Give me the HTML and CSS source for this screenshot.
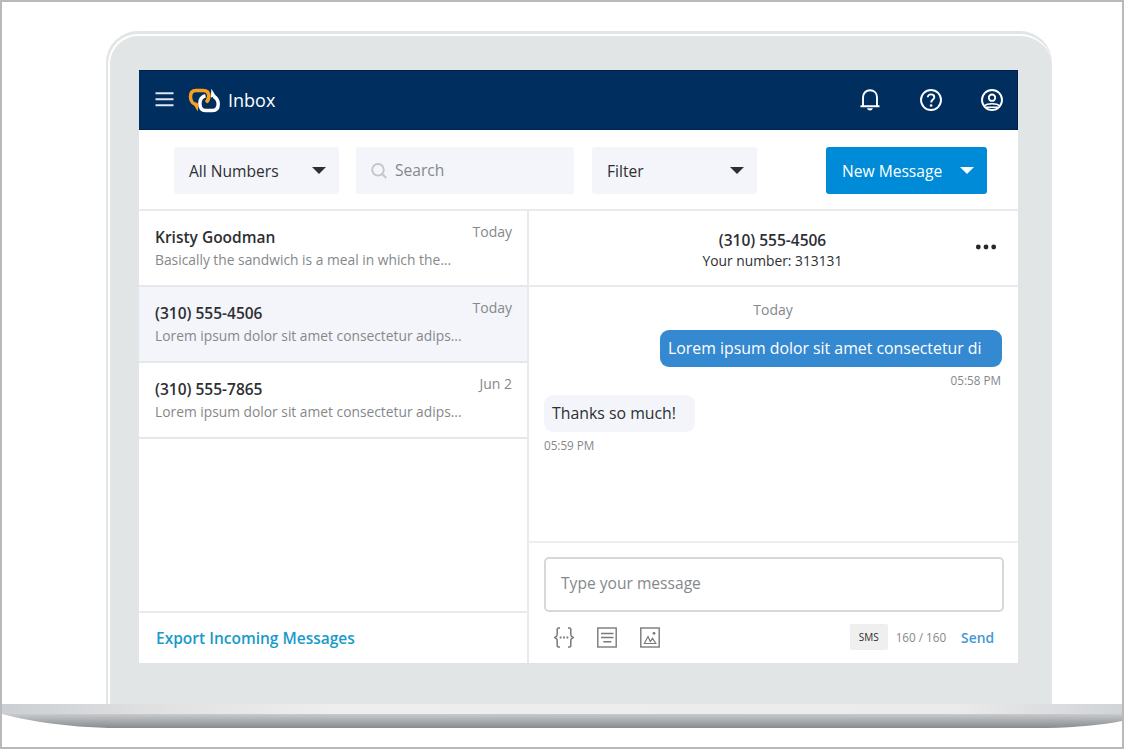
FILE: index.html
```html
<!DOCTYPE html>
<html lang="en">
<head>
  <meta charset="UTF-8">
  <meta name="viewport" content="width=device-width, initial-scale=1.0">
  <title>Inbox</title>
  <link rel="stylesheet" href="styles.css">
</head>
<body>
  <div class="laptop">
    <div class="lid">
      <div class="bezel">
        <div class="screen">

          <header class="topbar">
            <svg class="menu-icon" width="19" height="15" viewBox="0 0 19 15"><path d="M.5 1.300h18M.5 7.300h18M.5 13.300h18" stroke="#dfe6f2" stroke-width="1.900"/></svg>
            <svg class="logo" width="33" height="27" viewBox="0 0 33 27" fill="none">
              <path d="M9 17.500C5 17.500 2.500 14 2.500 9.500Q2.500 3.400 8 3.400H15Q20.800 3.400 20.800 9Q20.800 13 18.500 15" stroke="#f9a01f" stroke-width="3.500"/>
              <path d="M5.500 17.500L9.800 24.500L10.500 16Z" fill="#f9a01f"/>
              <path d="M17.500 8.800C13.500 9.800 11.900 12.500 11.900 16.500Q11.900 23.500 17.500 23.500H24.500Q30.200 23.500 30.200 17Q30.200 11.500 25.500 9.300" stroke="#fff" stroke-width="3.500"/>
              <path d="M23 10.500L23.300 1.800L27.800 9Z" fill="#fff"/>
              <path d="M20.700 7Q21.200 12.500 18 15.200" stroke="#f9a01f" stroke-width="3.300"/>
            </svg>
            <h1>Inbox</h1>
            <nav class="top-icons">
              <svg width="22" height="24" viewBox="0 0 22 24" fill="none" stroke="#fff" stroke-width="1.900"><path d="M1.500 18.300H20.500M4 18V9.500C4 5 7 2.300 11 2.300S18 5 18 9.500V18"/><path d="M8 20.300h6q-.7 2.300-3 2.300t-3-2.300z" fill="#fff" stroke="none"/></svg>
              <svg width="24" height="24" viewBox="0 0 24 24" fill="none" stroke="#fff" stroke-width="1.900"><circle cx="12" cy="12" r="10"/><path d="M8.800 9.300C8.800 7.400 10.200 6.400 12 6.400S15.300 7.600 15.300 9.200C15.300 11.500 12.200 11.600 12.200 14.600"/><circle cx="12.100" cy="17.500" r="1.300" fill="#fff" stroke="none"/></svg>
              <svg width="24" height="24" viewBox="0 0 24 24" fill="none" stroke="#fff" stroke-width="1.900"><circle cx="12" cy="12" r="10"/><circle cx="12" cy="9.700" r="3.200"/><path d="M4.500 18C6.500 16 9 15.800 12 15.800S17.500 16 19.500 18M6 19.300H18" stroke-width="1.500"/></svg>
            </nav>
          </header>

          <div class="toolbar">
            <div class="select numbers"><span>All Numbers</span><i class="caret"></i></div>
            <div class="search">
              <svg width="16" height="16" viewBox="0 0 16 16" fill="none" stroke="#c3c6c9" stroke-width="1.900"><circle cx="7" cy="6.800" r="5.800"/><path d="M11.200 11L15.200 15"/></svg>
              <span>Search</span>
            </div>
            <div class="select filter"><span>Filter</span><i class="caret"></i></div>
            <div class="new-message"><span>New Message</span><i class="caret"></i></div>
          </div>

          <main class="panes">
            <section class="conversations">
              <div class="conversation">
                <div class="name">Kristy Goodman</div>
                <div class="date">Today</div>
                <div class="preview">Basically the sandwich is a meal in which the...</div>
              </div>
              <div class="conversation active">
                <div class="name">(310) 555-4506</div>
                <div class="date">Today</div>
                <div class="preview">Lorem ipsum dolor sit amet consectetur adips...</div>
              </div>
              <div class="conversation">
                <div class="name">(310) 555-7865</div>
                <div class="date">Jun 2</div>
                <div class="preview">Lorem ipsum dolor sit amet consectetur adips...</div>
              </div>
              <a class="export">Export Incoming Messages</a>
            </section>

            <section class="thread">
              <div class="thread-header">
                <div class="contact">
                  <div class="phone">(310) 555-4506</div>
                  <div class="own-number">Your number: 313131</div>
                </div>
                <svg class="more" width="22" height="6" viewBox="0 0 22 6" fill="#26282b"><circle cx="3.300" cy="3" r="2.400"/><circle cx="11" cy="3" r="2.400"/><circle cx="18.700" cy="3" r="2.400"/></svg>
              </div>
              <div class="messages">
                <div class="day">Today</div>
                <div class="bubble sent">Lorem ipsum dolor sit amet consectetur di</div>
                <div class="time sent-time">05:58 PM</div>
                <div class="bubble received">Thanks so much!</div>
                <div class="time">05:59 PM</div>
              </div>
              <div class="compose">
                <div class="input">Type your message</div>
                <div class="actions">
                  <svg width="20" height="21" viewBox="0 0 20 21" fill="none" stroke="#77797b" stroke-width="1.500"><path d="M6 .9H4.500Q3.200 .9 3.200 2.300V7.500Q3.200 9.300 .8 10.500Q3.200 11.700 3.200 13.500V18.700Q3.200 20.100 4.500 20.100H6M14 .9h1.500Q16.800 .9 16.800 2.300V7.500Q16.800 9.300 19.200 10.500Q16.800 11.700 16.800 13.500V18.700Q16.800 20.100 15.500 20.100H14"/><path d="M5.700 10.500h1.800M9.100 10.500h1.800M12.500 10.500h1.800" stroke-width="1.800"/></svg>
                  <svg width="20" height="21" viewBox="0 0 20 21" fill="none" stroke="#77797b" stroke-width="1.400"><rect x=".8" y="1" width="18.400" height="19"/><path d="M4 6.500h12.500M4 10.500h12.500M6.300 14.700h8"/></svg>
                  <svg width="20" height="21" viewBox="0 0 20 21" fill="none" stroke="#77797b" stroke-width="1.400"><rect x=".8" y="1" width="18.400" height="19"/><path d="M4.300 16.500L8 9.500L10.300 14.500L12.500 11.300L15.800 16.500Z" stroke-width="1.200"/><circle cx="14" cy="6.300" r="1.400" fill="#77797b" stroke="none"/></svg>
                  <span class="sms">SMS</span>
                  <span class="count">160 / 160</span>
                  <span class="send">Send</span>
                </div>
              </div>
            </section>
          </main>

        </div>
      </div>
    </div>

    <svg class="base" width="1120" height="26" viewBox="0 0 1120 26">
      <defs>
        <linearGradient id="deck">
          <stop offset="0" stop-color="#cbcfd3"/>
          <stop offset=".15" stop-color="#e2e2e3"/>
          <stop offset=".3" stop-color="#eeeeee"/>
          <stop offset=".85" stop-color="#ebebeb"/>
          <stop offset="1" stop-color="#d0d3d7"/>
        </linearGradient>
        <linearGradient id="edge" x2="0" y2="1">
          <stop offset="0" stop-color="#c8cbcd"/>
          <stop offset="1" stop-color="#888c8e"/>
        </linearGradient>
      </defs>
      <path d="M0 10H1120V17Q1090 23 1045 24H106Q45 22 0 10Z" fill="url(#edge)"/>
      <path d="M0 0H1120V10H0Z" fill="url(#deck)"/>
    </svg>
  </div>
</body>
</html>
```

FILE: styles.css
```css
* { box-sizing: border-box; }
body { margin: 0; font-family: "Open Sans", sans-serif; color: #2d2f33; background: #fff; }
.laptop { width: 1124px; height: 749px; border: 2px solid #b9b9b9; padding-top: 29px; overflow: hidden; }

/* laptop frame */
.lid { width: 946px; height: 673px; margin-left: 104px; padding: 3px 0 0 2px; background: #e1e5e5; border-radius: 32px 32px 0 0; }
.bezel { height: 670px; padding: 34px 34px 0 29px; background: #e1e5e6; border: solid #fff; border-width: 2px 0 0 2px; border-radius: 30px 32px 0 0; }
.screen { width: 879px; height: 593px; background: #fff; display: flex; flex-direction: column; }
.base { display: block; }

/* header */
.topbar { height: 60px; background: #002e5f; display: flex; align-items: center; padding: 0 13px 0 16px; color: #fff; border: 1px solid #00204f; border-left: 0; }
.menu-icon { margin-top: -1px; }
.logo { margin-left: 14px; }
h1 { margin: 0 0 0 7px; font-size: 18px; font-weight: 400; line-height: 26px; }
.top-icons { margin-left: auto; display: flex; align-items: center; gap: 37px; }
.top-icons svg:first-child { margin-right: 1px; }

/* toolbar */
.toolbar { height: 81px; padding: 17px 31px 0 35px; display: flex; border-bottom: 2px solid #e8ebed; font-size: 15.6px; }
.select, .search, .new-message { height: 47px; border-radius: 3px; background: #f3f5fa; display: flex; align-items: center; padding: 0 13px 0 15px; }
.select { width: 165px; justify-content: space-between; }
.search { width: 218px; margin: 0 18px 0 17px; padding-bottom: 2px; color: #85888b; gap: 8px; }
.search svg { margin-top: 2px; }
.new-message { width: 161px; margin-left: auto; padding: 0 13px 0 16px; background: #008bd8; color: #fff; justify-content: space-between; }
.caret { border: 7px solid transparent; border-top-color: currentColor; border-bottom: 0; }

/* conversation list */
.panes { flex: 1; display: flex; }
.conversations { width: 390px; border-right: 2px solid #e8ebed; display: flex; flex-direction: column; }
.conversation { height: 76px; border-bottom: 2px solid #e4e8eb; padding: 15px 15px 0 16px; display: grid; grid-template-columns: 1fr auto; grid-template-rows: 22px 24px; align-content: start; }
.conversation.active { background: #f3f5fa; }
.name { font-size: 15.5px; font-weight: 600; line-height: 22px; }
.date { font-size: 14px; line-height: 22px; color: #85888b; margin-top: -5px; }
.preview { grid-column: 1 / 3; font-size: 13.8px; line-height: 24px; color: #85888b; }
.export { margin-top: auto; height: 52px; border-top: 2px solid #e8ebed; padding-left: 17px; font-size: 15.5px; font-weight: 600; line-height: 51px; color: #179bcc; }

/* message thread */
.thread { flex: 1; display: flex; flex-direction: column; }
.thread-header { height: 76px; border-bottom: 2px solid #e8ebed; position: relative; text-align: center; padding: 19px 2px 0 0; }
.phone { font-size: 15.5px; font-weight: 600; line-height: 21px; }
.own-number { font-size: 13.8px; line-height: 20px; }
.more { position: absolute; right: 21px; top: 33px; }
.messages { flex: 1; padding: 12px 16px 0 15px; display: flex; flex-direction: column; align-items: flex-start; }
.day { align-self: center; font-size: 14px; line-height: 22px; color: #85888b; }
.bubble { height: 37px; border-radius: 9px; font-size: 15.85px; line-height: 37px; padding: 0 8px; white-space: nowrap; }
.sent { width: 342px; margin-top: 9px; align-self: flex-end; background: #3489d0; color: #fff; }
.received { width: 151px; margin-top: 6px; background: #f3f5fa; }
.time { font-size: 11.7px; line-height: 18px; margin-top: 4px; color: #85888b; }
.sent-time { align-self: flex-end; margin-right: 1px; }
.compose { height: 122px; border-top: 2px solid #eceeef; padding: 14px 14px 0 15px; }
.input { height: 55px; border: 2px solid #d6d8d9; border-radius: 5px; padding-left: 15px; font-size: 15.6px; line-height: 49px; color: #85888b; }
.actions { display: flex; align-items: center; height: 26px; margin-top: 12px; padding: 0 10px; }
.actions svg { margin-right: 23px; }
.sms { width: 38px; height: 26px; margin-left: auto; background: #efefef; border-radius: 2px; text-align: center; font-size: 10px; line-height: 26px; }
.count { margin-left: 8px; font-size: 11.7px; color: #85888b; }
.send { margin-left: 15px; font-size: 13.8px; font-weight: 600; color: #3f98d6; }
```
